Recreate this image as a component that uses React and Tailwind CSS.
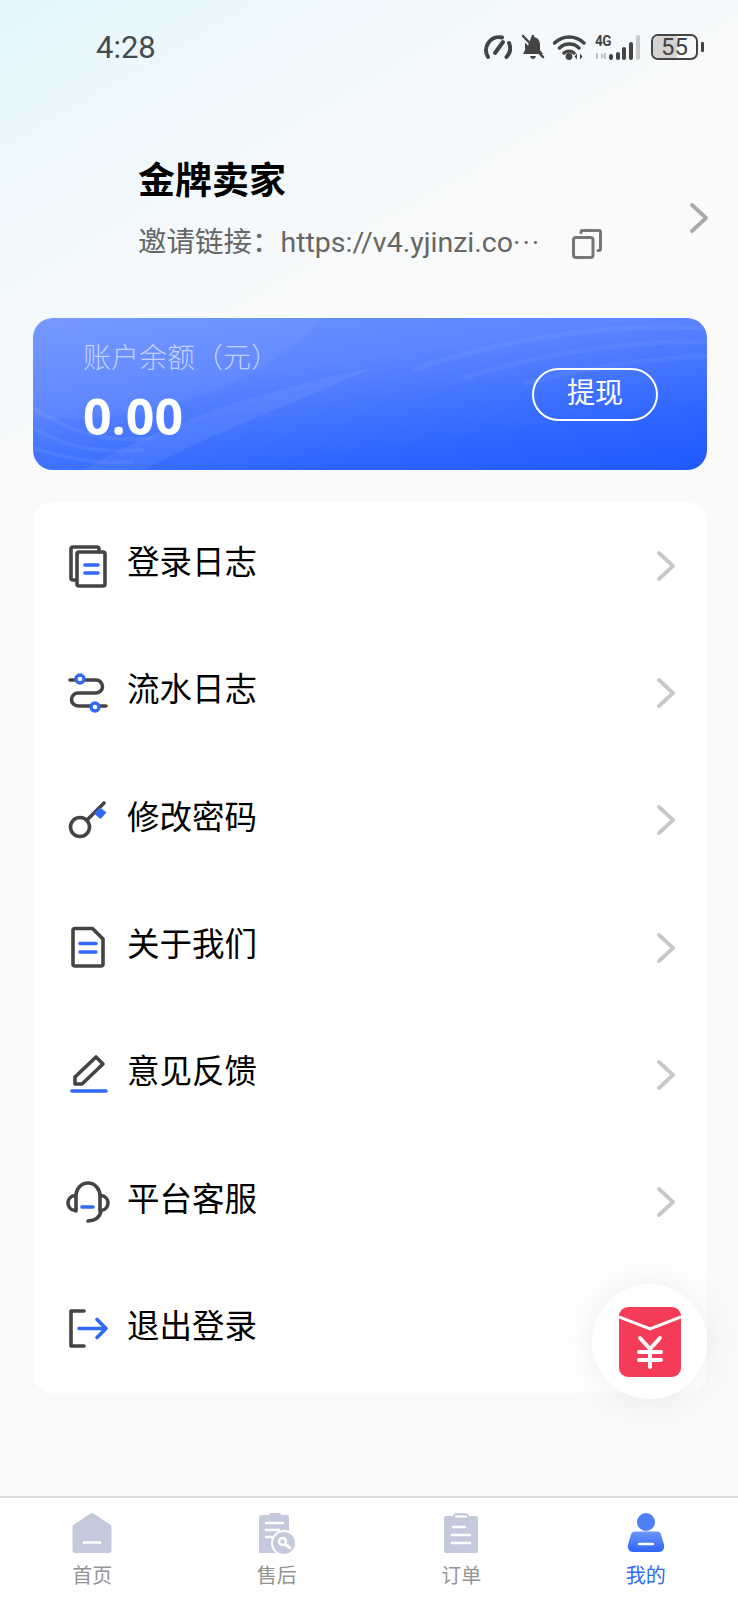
import React from "react";

const Chevron = ({ className, w = 20, h = 30, sw = 3.8 }) => (
  <svg width={w} height={h} viewBox="0 0 20 30" fill="none" className={className}>
    <path d="M3 2L17 15L3 28" stroke="currentColor" strokeWidth={sw} strokeLinecap="round" strokeLinejoin="round" />
  </svg>
);

const D = "#444444";
const B = "#3069f6";
const S = { fill: "none", strokeWidth: 3.6, strokeLinecap: "round", strokeLinejoin: "round" };

const icons = [
  <>
    <path {...S} stroke={D} d="M9 36H7a2 2 0 0 1-2-2V5a2 2 0 0 1 2-2h24a2 2 0 0 1 2 2v3" />
    <rect {...S} stroke={D} x="11" y="8" width="28" height="34" rx="2" />
    <path {...S} stroke={B} d="M19 21H32M19 29H32" />
  </>,
  <>
    <path {...S} stroke={D} d="M4 9H30a6.5 6.5 0 0 1 0 13H12a6.5 6.5 0 0 0 0 13H40" />
    <circle cx="14" cy="8" r="4" fill="#fff" stroke={B} strokeWidth="3.400" />
    <circle cx="29" cy="36" r="4" fill="#fff" stroke={B} strokeWidth="3.400" />
  </>,
  <>
    <circle {...S} stroke={D} cx="14" cy="29" r="9.500" />
    <path {...S} stroke={D} d="M21 22L38 5" />
    <path fill={B} d="M28 15.500L34 9.500 40.500 14.500 34.500 21z" />
  </>,
  <>
    <path {...S} stroke={D} d="M9 2.500H26.500L37 13V38a2 2 0 0 1-2 2H9a2 2 0 0 1-2-2V4.500a2 2 0 0 1 2-2z" />
    <path {...S} stroke={B} d="M14 17.500H30M14 26H30" />
  </>,
  <>
    <path {...S} stroke={D} d="M9 31V24L30 4L37 11L16 31Z" />
    <path {...S} stroke={B} d="M6 38H40" />
  </>,
  <>
    <path {...S} stroke={D} d="M10 31V16a12 13 0 0 1 24 0V31" />
    <path {...S} stroke={D} d="M9 15.500C4 16 2 20 2 23s2 7 7 7.500M35 15.500c5 .5 7 4.500 7 7.500s-2 7-7 7.500" />
    <path {...S} stroke={D} d="M35 31c-1 6-6 9.500-13 10" />
    <path {...S} stroke={B} d="M16 27H27" />
  </>,
  <>
    <path {...S} stroke={D} d="M18 4H5V39H18" />
    <path {...S} stroke={B} d="M13 21.500H40M31 12.500L40 21.500L31 30.500" />
  </>,
];

const rows = ["登录日志", "流水日志", "修改密码", "关于我们", "意见反馈", "平台客服", "退出登录"];

const tabIcons = [
  <svg key="a" width="40" height="42" viewBox="0 0 40 42" fill="none">
    <path fill="#c5c9dc" d="M18.500 1.500a2.500 2.500 0 0 1 3 0L38.500 13a2 2 0 0 1 1 1.800V39a2 2 0 0 1-2 2H2.500a2 2 0 0 1-2-2V14.800a2 2 0 0 1 1-1.800z" />
    <path stroke="#fff" strokeWidth="2.500" strokeLinecap="round" d="M12 30.500H28" />
  </svg>,
  <svg key="b" width="40" height="42" viewBox="0 0 40 42" fill="none">
    <path fill="#c5c9dc" d="M8 3h4a2 2 0 0 1 2-2h8a2 2 0 0 1 2 2h6a2 2 0 0 1 2 2v35a1 1 0 0 1-1 1H3a1 1 0 0 1-1-1V5a2 2 0 0 1 2-2z" />
    <path stroke="#fff" strokeWidth="2.500" strokeLinecap="round" d="M9 11H26M9 18H22M9 25H15" />
    <circle cx="27" cy="31" r="12" fill="#c5c9dc" stroke="#fff" strokeWidth="2" />
    <circle cx="25.500" cy="29.500" r="3.500" stroke="#fff" strokeWidth="2.500" />
    <path stroke="#fff" strokeWidth="3" strokeLinecap="round" d="M28 32L33 36" />
  </svg>,
  <svg key="c" width="40" height="42" viewBox="0 0 40 42" fill="none">
    <path fill="#c5c9dc" d="M5 4h7c.5-2 2-3 4-3h8c2 0 3.500 1 4 3h7a2 2 0 0 1 2 2v33a2 2 0 0 1-2 2H5a2 2 0 0 1-2-2V6a2 2 0 0 1 2-2z" />
    <path stroke="#fff" strokeWidth="2" strokeLinecap="round" d="M15 4.500H25" />
    <path stroke="#fff" strokeWidth="2.500" strokeLinecap="round" d="M12 15H24M11 23H29M11 31H29" />
  </svg>,
  <svg key="d" width="40" height="42" viewBox="0 0 40 42" fill="none">
    <defs>
      <linearGradient id="tabme" x1="0" y1="0" x2="0" y2="1">
        <stop offset="0" stopColor="#6e95fb" />
        <stop offset="1" stopColor="#2c64f6" />
      </linearGradient>
    </defs>
    <circle cx="20" cy="10" r="9" fill="#4f80f8" />
    <path fill="url(#tabme)" d="M9 19.500h22c2 0 3.500 1 4 3l3 10c1 4-1.500 7.500-5 7.500H7c-3.500 0-6-3.500-5-7.500l3-10c.5-2 2-3 4-3z" />
    <path stroke="#fff" strokeWidth="2.500" strokeLinecap="round" d="M13 32H27" />
  </svg>,
];

const tabs = ["首页", "售后", "订单", "我的"];

export default function App() {
  return (
    <div className="relative flex h-[1600px] w-[738px] flex-col overflow-hidden bg-[linear-gradient(150deg,#e2f8fe_0px,#eff8fc_180px,#f6f9fb_350px,#fafafa_480px)] font-['Roboto','Noto_Sans_CJK_SC',sans-serif] text-black">
      {/* status bar */}
      <div className="flex h-[96px] shrink-0 items-start justify-between pl-[96px] pr-[34px] pt-[28px]">
        <span className="text-[31px] leading-[40px] text-[#444b4f]">4:28</span>
        <div className="flex items-center pt-[6px]">
          <svg width="30" height="26" viewBox="0 0 30 26" fill="none" className="mr-[9px]">
            <path stroke="#444" strokeWidth="4" strokeLinecap="round" d="M6 23A13 13 0 0 1 20 3.500M27 9a13 13 0 0 1-2.500 14" />
            <path stroke="#444" strokeWidth="4" strokeLinecap="round" d="M13 19L21 8" />
          </svg>
          <svg width="24" height="26" viewBox="0 0 24 26" fill="none" className="mr-[8px]">
            <path fill="#444" d="M11 1h2v2c4 .8 6 4 6 8v5l3 4H4z" />
            <path fill="#444" d="M4 8.500L15 20H2l2-4zM9 22h6c-.5 2-1.500 3-3 3s-2.500-1-3-3z" />
            <path stroke="#444" strokeWidth="2.500" strokeLinecap="round" d="M2 2L22 23" />
          </svg>
          <svg width="34" height="26" viewBox="0 0 34 26" fill="none" className="mr-[8px]">
            <path stroke="#444" strokeWidth="3.400" strokeLinecap="round" d="M1.500 9A21 21 0 0 1 31 9M6.500 14a14 14 0 0 1 19.500 0M11 19a7.500 7.500 0 0 1 10 0" />
            <circle cx="16" cy="22.500" r="3.400" fill="#444" />
            <path fill="#444" d="M24 19.500v6l-2.500-3zM27 19.500v6l2.500-3z" />
          </svg>
          <div className="relative mr-[11px] h-[26px] w-[45px]">
            <span className="absolute left-0 top-[0px] origin-left font-['Roboto',sans-serif] text-[15px] font-bold leading-[15px] tracking-[-0.5px] text-[#444] [transform:scaleX(0.9)]">4G</span>
            <svg width="45" height="26" viewBox="0 0 45 26" className="absolute left-0 top-0" fill="none">
              <path stroke="#c4c4c4" strokeWidth="2" d="M2 19v6M6 20l2 2-2 2M10 19v6" />
              <path stroke="#444" strokeWidth="4" strokeLinecap="round" d="M16 22v2M23 20v4M29 15v9M36 10v14" />
              <path stroke="#c9c9c9" strokeWidth="4" strokeLinecap="round" d="M43 3v21" />
            </svg>
          </div>
          <div className="relative flex h-[26px] w-[47px] items-center justify-center overflow-hidden rounded-[7px] border-2 border-[#444]">
            <div className="absolute inset-y-0 left-0 w-[55%] bg-[#d3d3d3]" />
            <span className="relative text-[24px] leading-none text-[#444]">55</span>
          </div>
          <div className="ml-[3px] h-[10px] w-[3px] rounded-[1px] bg-[#444]" />
        </div>
      </div>

      {/* profile */}
      <div className="flex shrink-0 items-center pb-[55px] pl-[138px] pr-[29px] pt-[61px]">
        <div className="min-w-0 flex-1">
          <div className="text-[37px] font-bold leading-[50px]">金牌卖家</div>
          <div className="mt-[16px] flex h-[40px] items-center">
            <span className="w-[404px] whitespace-nowrap text-[28.5px] leading-[40px] text-[#666]">
              邀请链接：https://v4.yjinzi.co<span className="tracking-[2px]">···</span>
            </span>
            <svg width="30" height="30" viewBox="0 0 30 30" fill="none" className="ml-[30px] mt-[2px]">
              <rect x="1.500" y="8.500" width="19.500" height="20" rx="2.500" stroke="#777" strokeWidth="3" />
              <path d="M9 3.500V3a1.500 1.500 0 0 1 1.500-1.500H27A1.500 1.500 0 0 1 28.500 3v17a1.500 1.500 0 0 1-1.500 1.500h-1" stroke="#777" strokeWidth="3" strokeLinecap="round" />
            </svg>
          </div>
        </div>
        <Chevron className="mt-[16px] text-[#a8abae]" w={20} h={32} />
      </div>

      {/* balance */}
      <div className="relative ml-[33px] mr-[31px] flex h-[152px] shrink-0 items-center justify-between overflow-hidden rounded-[20px] bg-[linear-gradient(172deg,#7196ff_0%,#5c85ff_35%,#2e66ff_75%,#1f58ff_100%)] pl-[50px] pr-[49px]">
        <svg className="pointer-events-none absolute inset-0" width="674" height="152" viewBox="0 0 674 152" fill="none">
          <path d="M0 100C120 110 240 60 290 0L0 0Z" fill="#fff" opacity="0.04" />
          <path d="M50 152C140 100 240 70 340 50C260 85 170 120 110 152Z" fill="#fff" opacity="0.06" />
          <path d="M0 90C40 115 70 125 120 120M0 110C30 128 60 135 110 132M0 130C40 143 70 146 100 144" stroke="#fff" strokeWidth="4" opacity="0.06" />
          <path d="M380 52C470 20 580 5 674 10M430 60C510 35 600 22 674 24M490 66C550 50 620 40 674 38" stroke="#fff" strokeWidth="5" opacity="0.05" />
        </svg>
        <div className="relative pb-[2px]">
          <div className="text-[28px] font-light leading-[36px] text-white/60">账户余额（元）</div>
          <div className="mt-[10px] font-['Open_Sans','Noto_Sans_CJK_SC',sans-serif] text-[50px] font-bold leading-[58px] text-white">0.00</div>
        </div>
        <button className="relative flex h-[53px] w-[126px] items-center justify-center rounded-full border-2 border-white text-[28px] leading-none text-white">
          提现
        </button>
      </div>

      {/* menu */}
      <div className="ml-[33px] mr-[31px] mt-[32px] shrink-0 rounded-[20px] bg-white">
        {rows.map((r, i) => (
          <div key={r} className="flex h-[127.3px] items-center pl-[33px] pr-[31px]">
            <svg width="44" height="44" viewBox="0 0 44 44" className="shrink-0">
              {icons[i]}
            </svg>
            <span className="ml-[17px] flex-1 pb-[5px] text-[32.5px] leading-[44px]">{r}</span>
            <Chevron className="text-[#c8c8c8]" w={20} h={30} />
          </div>
        ))}
      </div>

      {/* tab bar */}
      <div className="mt-auto grid h-[104px] grid-cols-4 border-t-2 border-[#dcdcdc] bg-white">
        {tabs.map((t, i) => (
          <div key={t} className="flex flex-col items-center pt-[14px]">
            {tabIcons[i]}
            <span className={"mt-[8px] text-[20px] leading-[28px] " + (i === 3 ? "text-[#3069f6]" : "text-[#949494]")}>{t}</span>
          </div>
        ))}
      </div>

      {/* floating red packet */}
      <div className="absolute left-[592px] top-[1284px] flex h-[115px] w-[115px] items-center justify-center rounded-full bg-white shadow-[0_0_40px_rgba(0,0,0,0.08)]">
        <svg width="62" height="70" viewBox="0 0 62 70" fill="none">
          <rect width="62" height="70" rx="9" fill="#f43b58" />
          <path d="M0 10L31 22L62 10" stroke="#fff" strokeWidth="3" />
          <path stroke="#fff" strokeWidth="4" strokeLinecap="round" strokeLinejoin="round" d="M21 31L31 42L41 31M31 42V60M20 45H42M20 53H42" />
        </svg>
      </div>
    </div>
  );
}
